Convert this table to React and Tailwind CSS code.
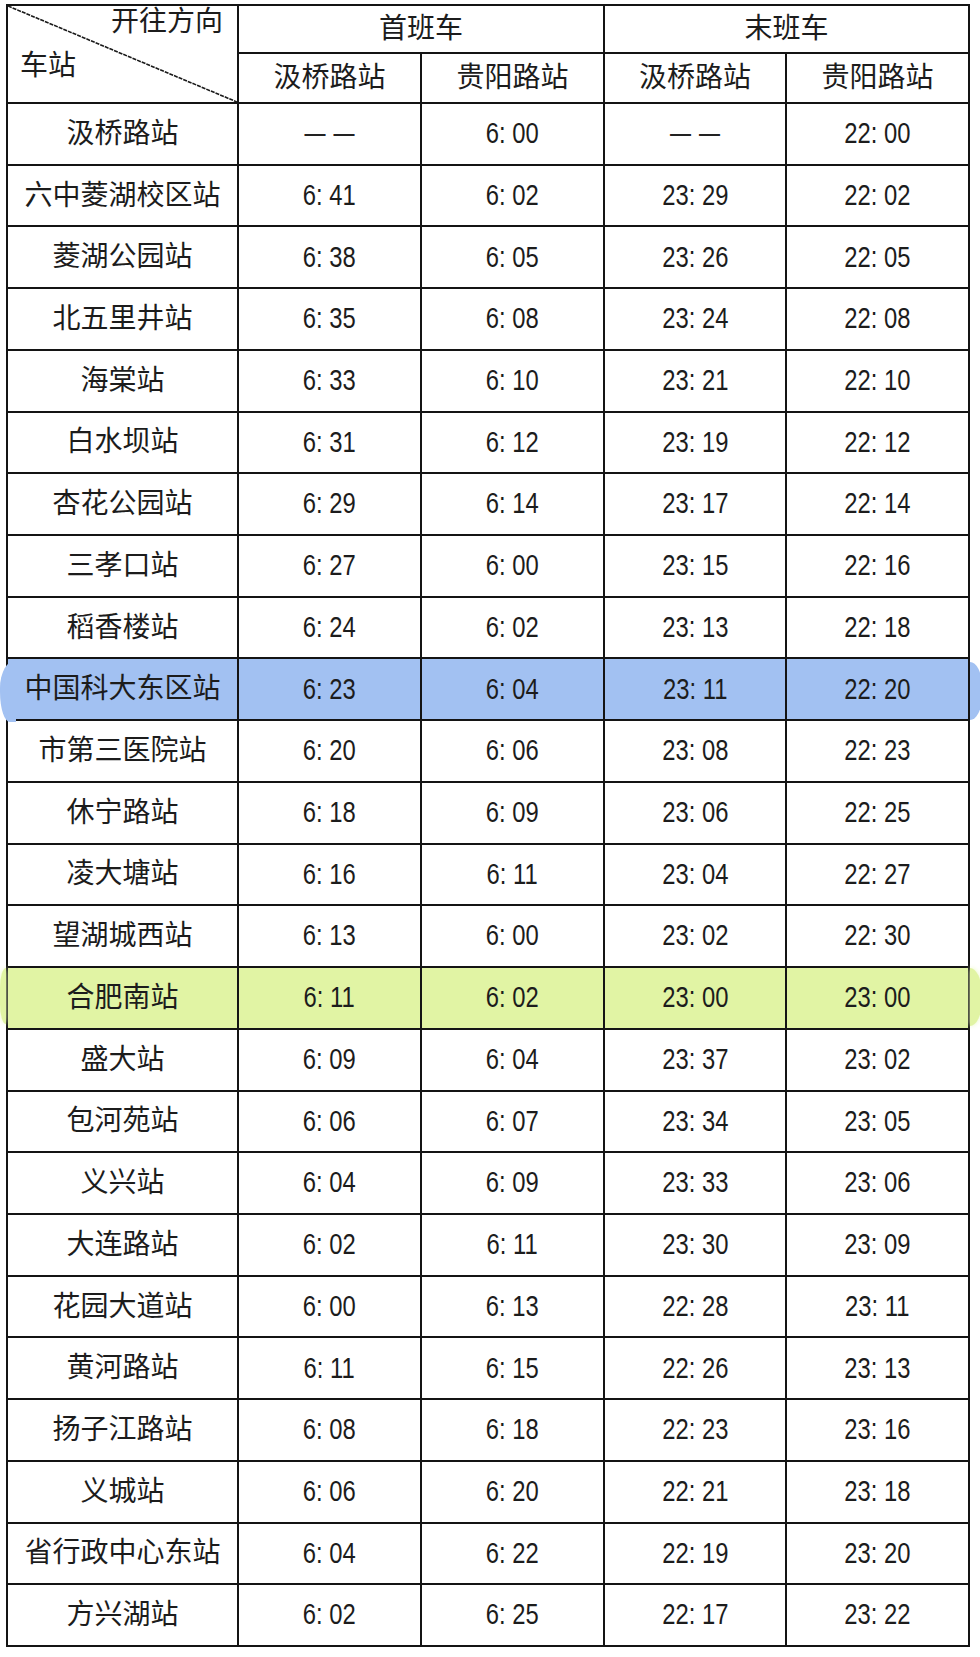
// Hefei metro line timetable: first / last train per station.
const rows = [
  ["汲桥路站", "——", "6: 00", "——", "22: 00"],
  ["六中菱湖校区站", "6: 41", "6: 02", "23: 29", "22: 02"],
  ["菱湖公园站", "6: 38", "6: 05", "23: 26", "22: 05"],
  ["北五里井站", "6: 35", "6: 08", "23: 24", "22: 08"],
  ["海棠站", "6: 33", "6: 10", "23: 21", "22: 10"],
  ["白水坝站", "6: 31", "6: 12", "23: 19", "22: 12"],
  ["杏花公园站", "6: 29", "6: 14", "23: 17", "22: 14"],
  ["三孝口站", "6: 27", "6: 00", "23: 15", "22: 16"],
  ["稻香楼站", "6: 24", "6: 02", "23: 13", "22: 18"],
  ["中国科大东区站", "6: 23", "6: 04", "23: 11", "22: 20"],
  ["市第三医院站", "6: 20", "6: 06", "23: 08", "22: 23"],
  ["休宁路站", "6: 18", "6: 09", "23: 06", "22: 25"],
  ["凌大塘站", "6: 16", "6: 11", "23: 04", "22: 27"],
  ["望湖城西站", "6: 13", "6: 00", "23: 02", "22: 30"],
  ["合肥南站", "6: 11", "6: 02", "23: 00", "23: 00"],
  ["盛大站", "6: 09", "6: 04", "23: 37", "23: 02"],
  ["包河苑站", "6: 06", "6: 07", "23: 34", "23: 05"],
  ["义兴站", "6: 04", "6: 09", "23: 33", "23: 06"],
  ["大连路站", "6: 02", "6: 11", "23: 30", "23: 09"],
  ["花园大道站", "6: 00", "6: 13", "22: 28", "23: 11"],
  ["黄河路站", "6: 11", "6: 15", "22: 26", "23: 13"],
  ["扬子江路站", "6: 08", "6: 18", "22: 23", "23: 16"],
  ["义城站", "6: 06", "6: 20", "22: 21", "23: 18"],
  ["省行政中心东站", "6: 04", "6: 22", "22: 19", "23: 20"],
  ["方兴湖站", "6: 02", "6: 25", "22: 17", "23: 22"],
];

const BLUE_ROW = 9;
const GREEN_ROW = 14;

function cellBg(rowIndex) {
  if (rowIndex === BLUE_ROW) return "bg-[#a2c1f2]";
  if (rowIndex === GREEN_ROW) return "bg-[#e1f4a4]";
  return "bg-white";
}

function Cell({ value, colIndex, rowIndex }) {
  let content;
  if (colIndex === 0) {
    content = <span className="text-[28px]">{value}</span>;
  } else if (value === "——") {
    content = <span className="-mt-[2px] pl-[8px] text-[21px] font-bold tracking-[8px] text-[#222]">{value}</span>;
  } else {
    content = <span className="inline-block scale-x-[0.82] text-[29px]">{value}</span>;
  }
  return (
    <div className={`flex items-center justify-center whitespace-nowrap ${cellBg(rowIndex)}`}>
      {content}
    </div>
  );
}

export default function App() {
  return (
    <div className="relative h-[1657px] w-[980px] overflow-hidden bg-white font-['Liberation_Sans','Noto_Sans_CJK_SC',sans-serif] text-[#1c1c1c]">
      <div className="ml-[6px] mt-[4px] grid h-[1643px] w-[964px] grid-cols-[229px_181px_181px_180px_181px] grid-rows-[46px_48px_repeat(25,1fr)] gap-[2px] bg-[#141414] p-[2px]">
        <div className="relative row-span-2 bg-white">
          <svg className="absolute inset-0 h-full w-full" viewBox="0 0 229 96" preserveAspectRatio="none">
            <line x1="0" y1="0" x2="229" y2="96" stroke="#1a1a1a" strokeWidth="1.6" strokeDasharray="4 1" />
          </svg>
          <span className="absolute right-[14px] top-[2px] text-[28px] leading-none">开往方向</span>
          <span className="absolute left-[12px] top-[46px] text-[28px] leading-none">车站</span>
        </div>
        <div className="col-span-2 flex items-center justify-center bg-white text-[28px]">首班车</div>
        <div className="col-span-2 flex items-center justify-center bg-white text-[28px]">末班车</div>
        <div className="flex items-center justify-center bg-white text-[28px]">汲桥路站</div>
        <div className="flex items-center justify-center bg-white text-[28px]">贵阳路站</div>
        <div className="flex items-center justify-center bg-white text-[28px]">汲桥路站</div>
        <div className="flex items-center justify-center bg-white text-[28px]">贵阳路站</div>

        {rows.map((row, rowIndex) =>
          row.map((value, colIndex) => (
            <Cell key={rowIndex + "-" + colIndex} value={value} colIndex={colIndex} rowIndex={rowIndex} />
          ))
        )}
      </div>

      {/* marker highlights drawn over the table edges */}
      <div className="absolute left-0 top-[660px] h-[62px] w-[16px] rounded-tl-[16px_28px] rounded-bl-[10px_30px] bg-[#a2c1f2]" />
      <div className="absolute left-[970px] top-[662px] h-[58px] w-[12px] rounded-tr-[12px_24px] rounded-br-[12px_24px] bg-[#a2c1f2]" />
      <div className="absolute left-0 top-[968px] h-[56px] w-[6px] rounded-tl-[6px_20px] rounded-bl-[6px_20px] bg-[#e1f4a4] shadow-[0_0_5px_#e9f7bd]" />
      <div className="absolute left-[970px] top-[968px] h-[58px] w-[12px] rounded-tr-[12px_26px] rounded-br-[12px_26px] bg-[#e1f4a4] shadow-[0_0_5px_#e9f7bd]" />
    </div>
  );
}
